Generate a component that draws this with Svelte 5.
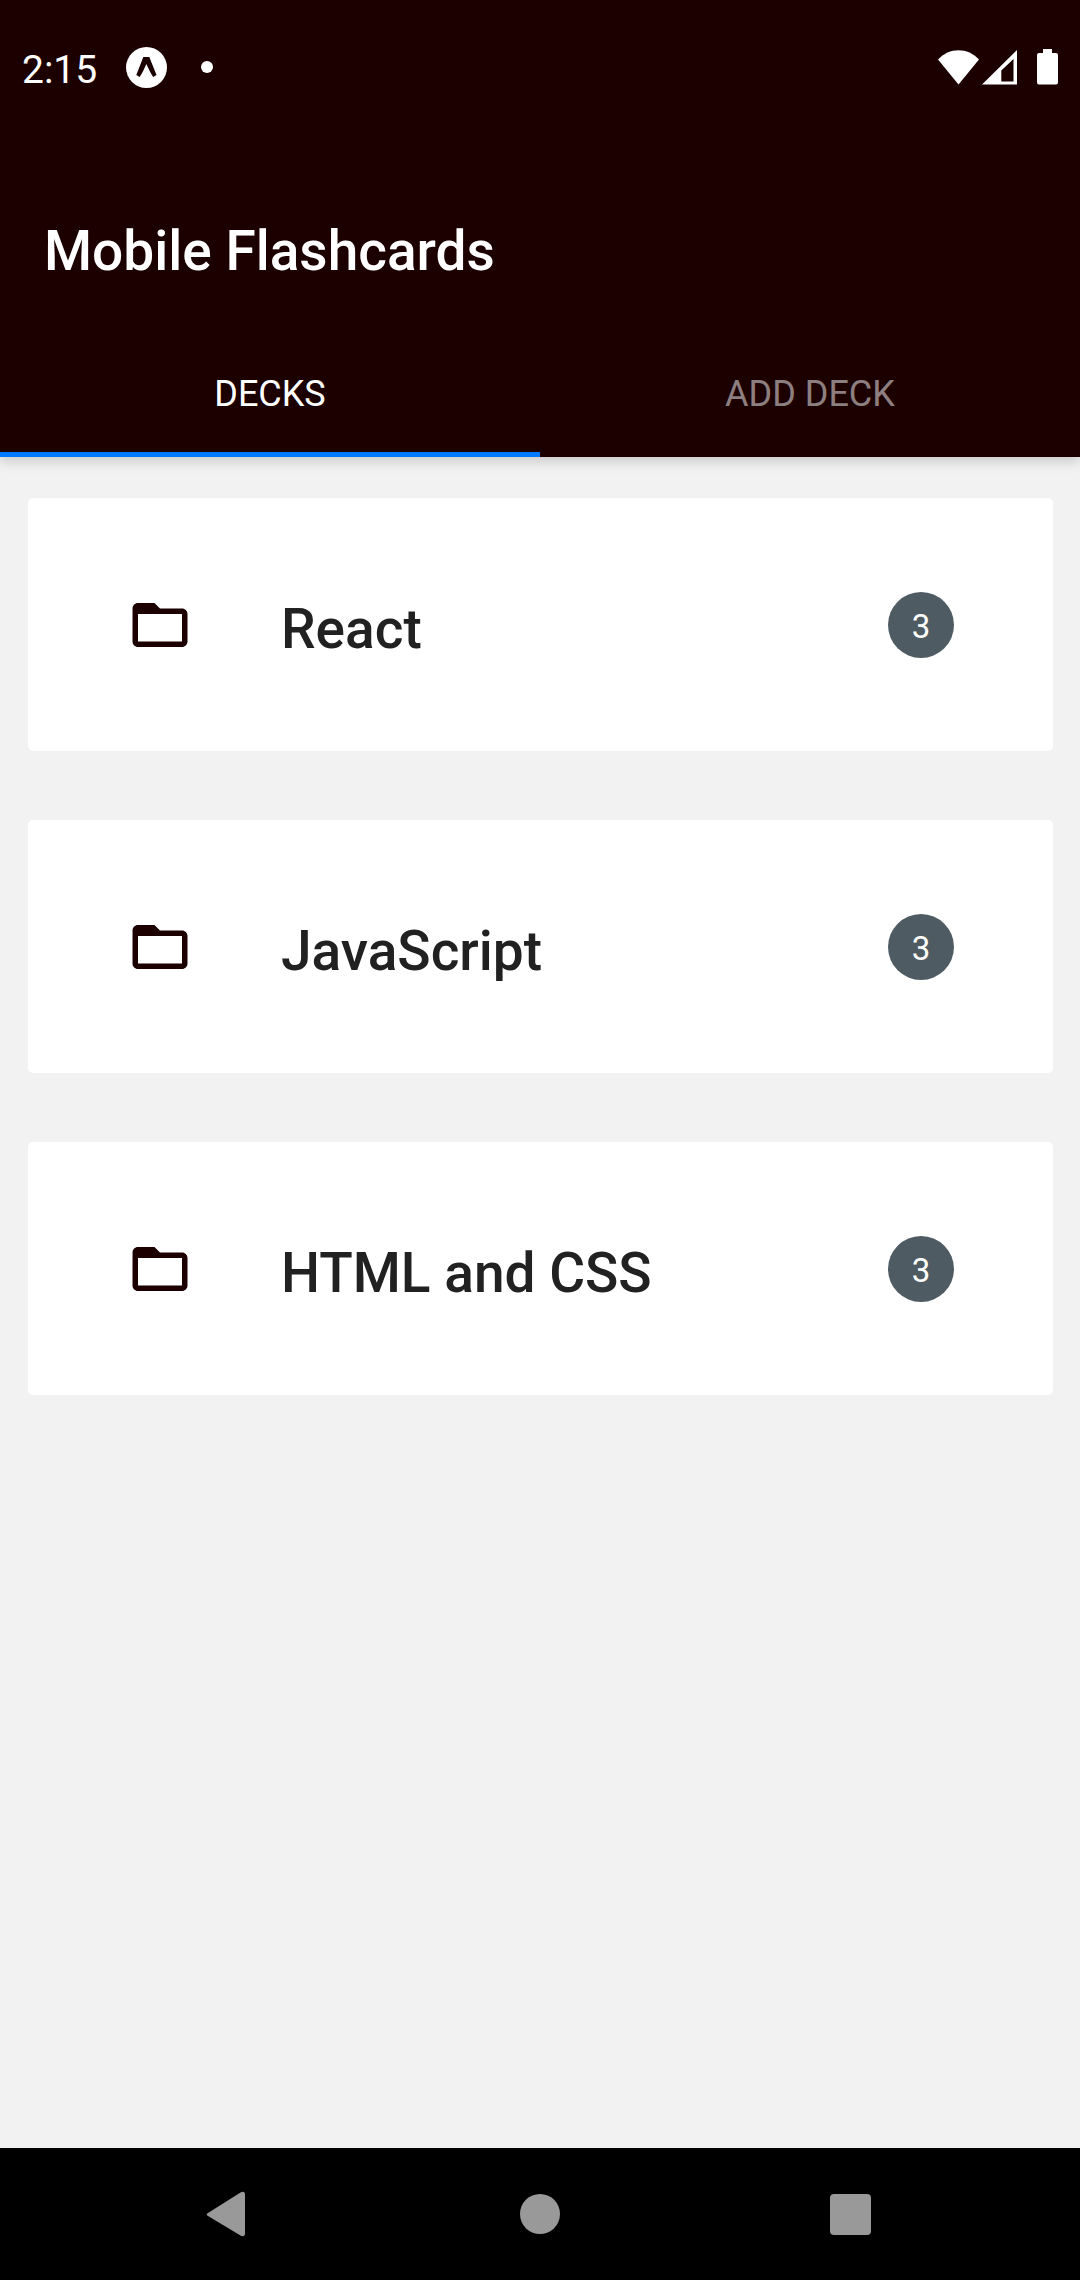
<script>
  const tabs = ['Decks', 'Add Deck'];
  const decks = [
    { name: 'React', cards: 3 },
    { name: 'JavaScript', cards: 3 },
    { name: 'HTML and CSS', cards: 3 }
  ];
  let active = $state(0);
</script>

<div class="screen">
  <header class="top">
    <div class="status">
      <time>2:15</time>
      <svg class="expo" width="41" height="41" viewBox="0 0 41 41" aria-hidden="true">
        <circle cx="20.5" cy="20.5" r="20.5" fill="#fff" />
        <path d="M17.3 10h6L30.5 28 27.2 30C24.6 26 22.4 21.5 20.3 17 18.5 21.5 16.3 26 13.6 30L10.3 28Z" fill="#1c0000" />
      </svg>
      <span class="dot"></span>
      <div class="signals">
        <svg width="41" height="35" viewBox="0 0 41 35" aria-hidden="true">
          <path d="M20.5 34.5L0 9.6C5.5 3.5 13 .3 20.5 .3S35.500 3.500 41 9.600Z" fill="#fff" />
        </svg>
        <svg width="35" height="35" viewBox="0 0 35 35" aria-hidden="true">
          <path d="M0 34.5H35V0ZM19.3 20.5 31.5 9V31.5H19.3Z" fill="#fff" fill-rule="evenodd" />
        </svg>
        <svg class="battery" width="21" height="36" viewBox="0 0 21 36" aria-hidden="true">
          <path d="M6 0h9v4h4a2 2 0 0 1 2 2v27.5a2 2 0 0 1-2 2H2a2 2 0 0 1-2-2V6a2 2 0 0 1 2-2h4z" fill="#fff" />
        </svg>
      </div>
    </div>
    <h1>Mobile Flashcards</h1>
    <div class="tabs" role="tablist">
      {#each tabs as tab, i}
        <button role="tab" class:active={active === i} aria-selected={active === i} onclick={() => (active = i)}>{tab}</button>
      {/each}
    </div>
  </header>

  <main>
    {#each decks as deck}
      <button class="card">
        <svg width="66" height="66" viewBox="0 0 24 24" aria-hidden="true">
          <path d="M20 6h-8l-2-2H4c-1.1 0-1.99.9-1.99 2L2 18c0 1.1.9 2 2 2h16c1.1 0 2-.9 2-2V8c0-1.1-.9-2-2-2zm0 12H4V8h16v10z" fill="#1c0000" />
        </svg>
        <span class="name">{deck.name}</span>
        <span class="badge">{deck.cards}</span>
      </button>
    {/each}
  </main>

  <nav>
    <button aria-label="Back">
      <svg width="48" height="48" viewBox="0 0 48 48">
        <path d="M2 23 34.500 2.500C37 1 39 2 39 4.500V43.500C39 46 37 47 34.500 45.500L2 26C.2 25 .2 24 2 23Z" fill="#999" />
      </svg>
    </button>
    <button aria-label="Home">
      <svg width="48" height="48" viewBox="0 0 48 48"><circle cx="24" cy="24" r="20" fill="#999" /></svg>
    </button>
    <button aria-label="Recent apps">
      <svg width="48" height="48" viewBox="0 0 48 48"><rect x="4" y="4" width="41" height="41" rx="4" fill="#999" /></svg>
    </button>
  </nav>
</div>

<style>
  :global(body) {
    margin: 0;
    background: #f2f2f2;
  }
  .screen {
    display: flex;
    flex-direction: column;
    min-height: 100vh;
    font-family: Roboto, sans-serif;
  }
  svg {
    display: block;
    flex: none;
  }
  button {
    border: 0;
    padding: 0;
    margin: 0;
    background: none;
    font: inherit;
    cursor: pointer;
  }
  .top {
    background: #1c0000;
    color: #fff;
    box-shadow: 0 4px 12px rgba(0, 0, 0, 0.18);
  }
  .status {
    display: flex;
    align-items: center;
    height: 134px;
    padding: 0 22px;
  }
  time {
    font-size: 39px;
    line-height: 48px;
    padding-top: 6px;
  }
  .expo {
    margin-left: 29px;
  }
  .dot {
    width: 12px;
    height: 12px;
    margin-left: 34px;
    border-radius: 50%;
    background: #fff;
  }
  .signals {
    display: flex;
    align-items: center;
    gap: 3px;
    margin-left: auto;
  }
  .battery {
    margin-left: 17px;
  }
  h1 {
    margin: 0;
    padding: 37px 44px 0;
    font-size: 55px;
    font-weight: 500;
    line-height: 160px;
  }
  .tabs {
    display: grid;
    grid-template-columns: 1fr 1fr;
  }
  .tabs button {
    padding: 5px 0 0;
    border-bottom: 5px solid transparent;
    font-size: 36px;
    line-height: 116px;
    text-transform: uppercase;
    color: rgba(255, 255, 255, 0.5);
  }
  .tabs .active {
    color: #fff;
    border-color: #007aff;
  }
  main {
    flex: 1;
    display: flex;
    flex-direction: column;
    gap: 69px;
    padding: 41px 27px 69px 28px;
  }
  .card {
    display: flex;
    align-items: center;
    padding: 94px 99px 93px;
    border-radius: 5px;
    background: #fff;
    text-align: left;
  }
  .name {
    flex: 1;
    margin-left: 88px;
    padding-top: 8px;
    font-size: 55px;
    font-weight: 500;
    line-height: 58px;
    color: #212121;
  }
  .badge {
    width: 66px;
    padding-top: 4px;
    border-radius: 50%;
    background: #4f5b62;
    color: #fff;
    font-size: 33px;
    line-height: 62px;
    text-align: center;
  }
  nav {
    display: grid;
    grid-template-columns: repeat(3, 1fr);
    padding: 0 75px;
    background: #000;
  }
  nav button {
    display: flex;
    align-items: center;
    justify-content: center;
    height: 132px;
  }
</style>
